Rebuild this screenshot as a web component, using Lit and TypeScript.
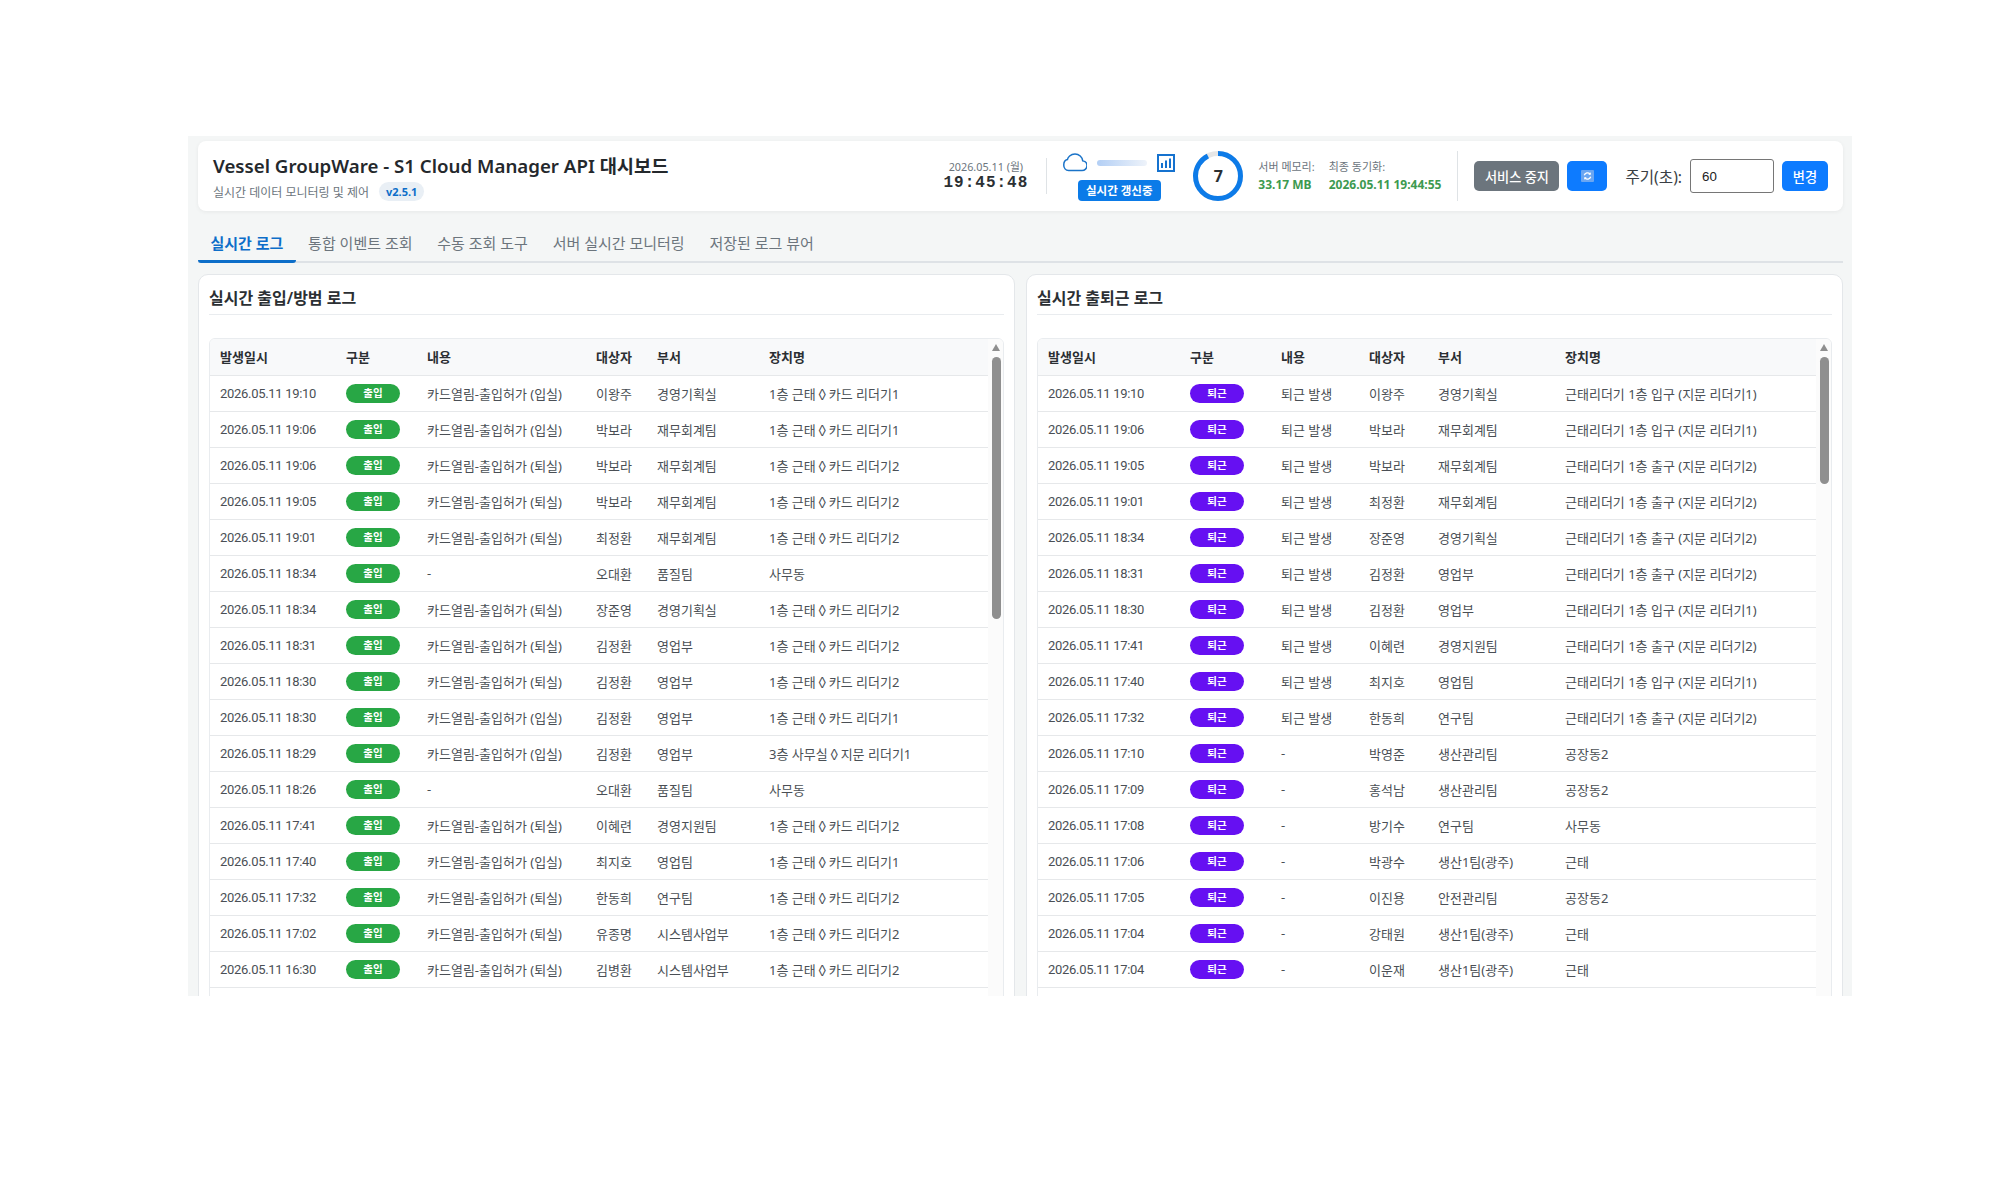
import { LitElement, html, css } from "lit";
import { customElement } from "lit/decorators.js";

type Row = [string, string, string, string, string];

const GATE_IN = "카드열림-출입허가 (입실)";
const GATE_OUT = "카드열림-출입허가 (퇴실)";
const READER1 = "1층 근태◊카드 리더기1";
const READER2 = "1층 근태◊카드 리더기2";
const DAY = "2026.05.11 ";

const accessRows: Row[] = [
  ["19:10", GATE_IN, "이왕주", "경영기획실", READER1],
  ["19:06", GATE_IN, "박보라", "재무회계팀", READER1],
  ["19:06", GATE_OUT, "박보라", "재무회계팀", READER2],
  ["19:05", GATE_OUT, "박보라", "재무회계팀", READER2],
  ["19:01", GATE_OUT, "최정환", "재무회계팀", READER2],
  ["18:34", "-", "오대환", "품질팀", "사무동"],
  ["18:34", GATE_OUT, "장준영", "경영기획실", READER2],
  ["18:31", GATE_OUT, "김정환", "영업부", READER2],
  ["18:30", GATE_OUT, "김정환", "영업부", READER2],
  ["18:30", GATE_IN, "김정환", "영업부", READER1],
  ["18:29", GATE_IN, "김정환", "영업부", "3층 사무실◊지문 리더기1"],
  ["18:26", "-", "오대환", "품질팀", "사무동"],
  ["17:41", GATE_OUT, "이혜련", "경영지원팀", READER2],
  ["17:40", GATE_IN, "최지호", "영업팀", READER1],
  ["17:32", GATE_OUT, "한동희", "연구팀", READER2],
  ["17:02", GATE_OUT, "유종명", "시스템사업부", READER2],
  ["16:30", GATE_OUT, "김병환", "시스템사업부", READER2],
];

const LEAVE = "퇴근 발생";
const ENTRY = "근태리더기 1층 입구 (지문 리더기1)";
const EXIT = "근태리더기 1층 출구 (지문 리더기2)";

const leaveRows: Row[] = [
  ["19:10", LEAVE, "이왕주", "경영기획실", ENTRY],
  ["19:06", LEAVE, "박보라", "재무회계팀", ENTRY],
  ["19:05", LEAVE, "박보라", "재무회계팀", EXIT],
  ["19:01", LEAVE, "최정환", "재무회계팀", EXIT],
  ["18:34", LEAVE, "장준영", "경영기획실", EXIT],
  ["18:31", LEAVE, "김정환", "영업부", EXIT],
  ["18:30", LEAVE, "김정환", "영업부", ENTRY],
  ["17:41", LEAVE, "이혜련", "경영지원팀", EXIT],
  ["17:40", LEAVE, "최지호", "영업팀", ENTRY],
  ["17:32", LEAVE, "한동희", "연구팀", EXIT],
  ["17:10", "-", "박영준", "생산관리팀", "공장동2"],
  ["17:09", "-", "홍석남", "생산관리팀", "공장동2"],
  ["17:08", "-", "방기수", "연구팀", "사무동"],
  ["17:06", "-", "박광수", "생산1팀(광주)", "근태"],
  ["17:05", "-", "이진용", "안전관리팀", "공장동2"],
  ["17:04", "-", "강태원", "생산1팀(광주)", "근태"],
  ["17:04", "-", "이운재", "생산1팀(광주)", "근태"],
];

const TABS = ["실시간 로그", "통합 이벤트 조회", "수동 조회 도구", "서버 실시간 모니터링", "저장된 로그 뷰어"];

@customElement("app-root")
export class AppRoot extends LitElement {
  static styles = css`
    :host {
      display: block;
      box-sizing: border-box;
      width: 2003px;
      height: 1192px;
      padding: 136px 151px 196px 188px;
      background: #fff;
      font-family: "Noto Sans", "Noto Sans CJK KR", sans-serif;
      color: #333;
    }

    * {
      box-sizing: border-box;
    }

    .page {
      height: 860px;
      padding: 5px 9px 0 10px;
      background: #f4f6f6;
      overflow: hidden;
    }

    /* Header card */
    .header {
      display: flex;
      align-items: center;
      justify-content: space-between;
      height: 70px;
      padding: 0 15px;
      background: #fff;
      border-radius: 8px;
      box-shadow: 0 1px 4px rgba(0, 0, 0, 0.06);
    }

    .brand {
      padding-top: 3px;
    }

    h1 {
      margin: 0 0 4px;
      font-size: 18.7px;
      font-weight: 600;
      line-height: 24px;
      color: #24282c;
    }

    .subtitle {
      display: flex;
      align-items: center;
      gap: 10px;
      font-size: 12px;
      color: #6c757d;
    }

    .version {
      padding: 2px 7px;
      border-radius: 10px;
      background: #e9eff5;
      color: #0d6ec9;
      font-size: 11px;
      font-weight: 700;
      line-height: 15px;
    }

    .status {
      display: flex;
      align-items: center;
    }

    .clock {
      display: flex;
      flex-direction: column;
      align-items: center;
      margin-right: 18px;
    }

    .clock .date {
      font-size: 10.8px;
      line-height: 15px;
      color: #6c757d;
    }

    .clock .time {
      font-family: "Liberation Mono", monospace;
      font-size: 16px;
      font-weight: 700;
      letter-spacing: 1px;
      line-height: 19px;
      color: #2b2f33;
    }

    .sep {
      width: 1px;
      height: 36px;
      background: #dfe3e6;
    }

    .sep.tall {
      height: 50px;
      margin: 0 16px;
    }

    .live {
      display: flex;
      flex-direction: column;
      align-items: center;
      gap: 5px;
      margin: 0 18px 0 16px;
    }

    .live-icons {
      display: flex;
      align-items: center;
      gap: 10px;
    }

    .live-icons svg {
      display: block;
    }

    .pulse {
      width: 50px;
      height: 6px;
      border-radius: 3px;
      background: linear-gradient(to right, #b3cff5, #eef3fa);
    }

    .live-badge {
      padding: 0 8px;
      border-radius: 4px;
      background: #0b7be8;
      color: #fff;
      font-size: 11.5px;
      font-weight: 700;
      line-height: 21px;
    }

    .ring {
      position: relative;
      width: 50px;
      height: 50px;
      margin-right: 15px;
    }

    .ring svg {
      display: block;
      transform: rotate(-90deg);
    }

    .ring b {
      position: absolute;
      inset: 0;
      display: flex;
      align-items: center;
      justify-content: center;
      font-size: 16px;
      color: #2b2f33;
    }

    .stats {
      display: flex;
      gap: 14px;
    }

    .stat {
      display: flex;
      flex-direction: column;
      gap: 3px;
    }

    .stat span {
      font-size: 11px;
      line-height: 15px;
      color: #6c757d;
    }

    .stat b {
      font-size: 12px;
      line-height: 16px;
      color: #3d9a50;
    }

    .controls {
      display: flex;
      align-items: center;
    }

    button {
      height: 30px;
      border: 0;
      border-radius: 5px;
      background: #0d7bff;
      color: #fff;
      font: inherit;
      font-size: 13.2px;
      font-weight: 500;
      padding: 0;
    }

    .stop {
      width: 85px;
      margin-right: 8px;
      background: #6c757d;
    }

    .refresh {
      display: flex;
      align-items: center;
      justify-content: center;
      width: 40px;
      margin-right: 18px;
    }

    .interval {
      margin-right: 8px;
      font-size: 15.6px;
      color: #3a3f44;
    }

    input {
      width: 84px;
      height: 34px;
      margin-right: 8px;
      padding: 0 11px;
      border: 1px solid #767676;
      border-radius: 3px;
      font-family: "Liberation Sans", sans-serif;
      font-size: 13.3px;
      color: #222;
    }

    .apply {
      width: 46px;
    }

    /* Tabs */
    .tabs {
      display: flex;
      height: 52px;
      padding-top: 12px;
      border-bottom: 2px solid #dee2e6;
    }

    .tab {
      padding: 0 12.4px;
      font-size: 15px;
      line-height: 40px;
      color: #6c757d;
    }

    .tab.active {
      margin-bottom: -2px;
      border-bottom: 3px solid #0d6ec9;
      border-radius: 0 0 3px 3px;
      color: #0d6ec9;
      font-weight: 700;
    }

    /* Log panels */
    .panels {
      display: grid;
      grid-template-columns: 1fr 1fr;
      gap: 11px;
      margin-top: 11px;
    }

    .panel {
      height: 800px;
      padding: 11px 10px;
      background: #fff;
      border: 1px solid #e4e7ea;
      border-radius: 10px;
    }

    h2 {
      margin: 0 0 23px;
      padding-bottom: 4px;
      border-bottom: 1px solid #e9ecef;
      font-size: 16px;
      font-weight: 600;
      line-height: 24px;
      color: #2b2f33;
    }

    .log {
      display: flex;
      border: 1px solid #e9ecef;
      border-radius: 6px 6px 0 0;
      overflow: hidden;
    }

    table {
      flex: 1;
      min-width: 0;
      border-collapse: collapse;
      table-layout: fixed;
    }

    th,
    td {
      height: 36px;
      padding: 0 0 0 10px;
      text-align: left;
      white-space: nowrap;
      border-bottom: 1px solid #e6e8ea;
    }

    th {
      background: #f8f9fa;
      font-size: 13px;
      font-weight: 600;
      color: #2b2f33;
    }

    td {
      font-size: 13px;
      color: #4a4f55;
    }

    td.when {
      font-family: Roboto, "Noto Sans CJK KR", sans-serif;
      letter-spacing: -0.3px;
    }

    .access .c1 { width: 126px; }
    .access .c2 { width: 81px; }
    .access .c3 { width: 169px; }
    .access .c4 { width: 61px; }
    .access .c5 { width: 112px; }

    .leave .c1 { width: 142px; }
    .leave .c2 { width: 91px; }
    .leave .c3 { width: 88px; }
    .leave .c4 { width: 69px; }
    .leave .c5 { width: 127px; }

    .badge {
      display: block;
      width: 54px;
      border-radius: 10px;
      color: #fff;
      font-size: 10.5px;
      font-weight: 700;
      line-height: 19px;
      text-align: center;
    }

    .access .badge {
      background: #28a745;
    }

    .leave .badge {
      background: #6610f2;
    }

    .scrollbar {
      flex: none;
      width: 15px;
      padding: 5px 2px 0 4px;
      background: #fbfbfb;
    }

    .arrow {
      width: 0;
      height: 0;
      margin: 0 0 6px;
      border: 4.5px solid transparent;
      border-top: 0;
      border-bottom: 7px solid #8f8f8f;
    }

    .thumb {
      width: 9px;
      border-radius: 5px;
      background: #8f8f8f;
    }
  `;

  private logTable(kind: string, title: string, label: string, thumb: number, rows: Row[]) {
    return html`
      <section class="panel ${kind}">
        <h2>${title}</h2>
        <div class="log">
          <table>
            <colgroup>
              <col class="c1" /><col class="c2" /><col class="c3" /><col class="c4" /><col class="c5" /><col />
            </colgroup>
            <thead>
              <tr><th>발생일시</th><th>구분</th><th>내용</th><th>대상자</th><th>부서</th><th>장치명</th></tr>
            </thead>
            <tbody>
              ${rows.map(
                ([time, what, who, dept, device]) => html`
                  <tr>
                    <td class="when">${DAY + time}</td>
                    <td><span class="badge">${label}</span></td>
                    <td>${what}</td>
                    <td>${who}</td>
                    <td>${dept}</td>
                    <td>${device}</td>
                  </tr>
                `
              )}
              <tr><td colspan="6"></td></tr>
            </tbody>
          </table>
          <div class="scrollbar">
            <div class="arrow"></div>
            <div class="thumb" style="height: ${thumb}px"></div>
          </div>
        </div>
      </section>
    `;
  }

  render() {
    return html`
      <div class="page">
        <header class="header">
          <div class="brand">
            <h1>Vessel GroupWare - S1 Cloud Manager API 대시보드</h1>
            <div class="subtitle"><span>실시간 데이터 모니터링 및 제어</span><span class="version">v2.5.1</span></div>
          </div>
          <div class="status">
            <div class="clock">
              <span class="date">2026.05.11 (월)</span>
              <span class="time">19:45:48</span>
            </div>
            <div class="sep"></div>
            <div class="live">
              <div class="live-icons">
                <svg width="24" height="24" viewBox="0 0 16 16" fill="none" stroke="#1a73c8" stroke-width="1">
                  <path d="M4.406 3.342A5.53 5.53 0 0 1 8 2c2.69 0 4.923 2 5.166 4.579C14.758 6.804 16 8.137 16 9.773 16 11.569 14.502 13 12.687 13H3.781C1.708 13 .5 11.366.5 9.318c0-1.763 .766-3.223 2.442-3.593.143-.863.698-1.723 1.464-2.383z" />
                </svg>
                <div class="pulse"></div>
                <svg width="18" height="18" viewBox="0 0 18 18" fill="none" stroke="#1572cf" stroke-width="2">
                  <rect x="1" y="1" width="16" height="16" />
                  <path d="M5 14V9M9 14V6.5M13 14V4.5" />
                </svg>
              </div>
              <span class="live-badge">실시간 갱신중</span>
            </div>
            <div class="ring">
              <svg width="50" height="50" viewBox="0 0 50 50" fill="none" stroke-width="5">
                <circle cx="25" cy="25" r="22.5" stroke="#e6e6e6" />
                <circle cx="25" cy="25" r="22.5" stroke="#0d7be8" stroke-dasharray="130 141.4" />
              </svg>
              <b>7</b>
            </div>
            <div class="stats">
              <div class="stat"><span>서버 메모리:</span><b>33.17 MB</b></div>
              <div class="stat"><span>최종 동기화:</span><b>2026.05.11 19:44:55</b></div>
            </div>
            <div class="sep tall"></div>
            <div class="controls">
              <button class="stop">서비스 중지</button>
              <button class="refresh">
                <svg width="13" height="12" viewBox="0 0 13 12">
                  <rect width="13" height="12" rx="1" fill="#6aa6f2" />
                  <path d="M3.3 5.2A3.3 3.3 0 0 1 9 4M9.7 6.8A3.3 3.3 0 0 1 4 8" fill="none" stroke="#fff" stroke-width="1.3" />
                  <path d="M9.8 2.2v2.5H7.3zM3.2 9.8V7.3h2.5z" fill="#fff" />
                </svg>
              </button>
              <span class="interval">주기(초):</span>
              <input value="60" />
              <button class="apply">변경</button>
            </div>
          </div>
        </header>

        <nav class="tabs">
          ${TABS.map((tab, i) => html`<div class="tab ${i === 0 ? "active" : ""}">${tab}</div>`)}
        </nav>

        <div class="panels">
          ${this.logTable("access", "실시간 출입/방범 로그", "출입", 262, accessRows)}
          ${this.logTable("leave", "실시간 출퇴근 로그", "퇴근", 127, leaveRows)}
        </div>
      </div>
    `;
  }
}
